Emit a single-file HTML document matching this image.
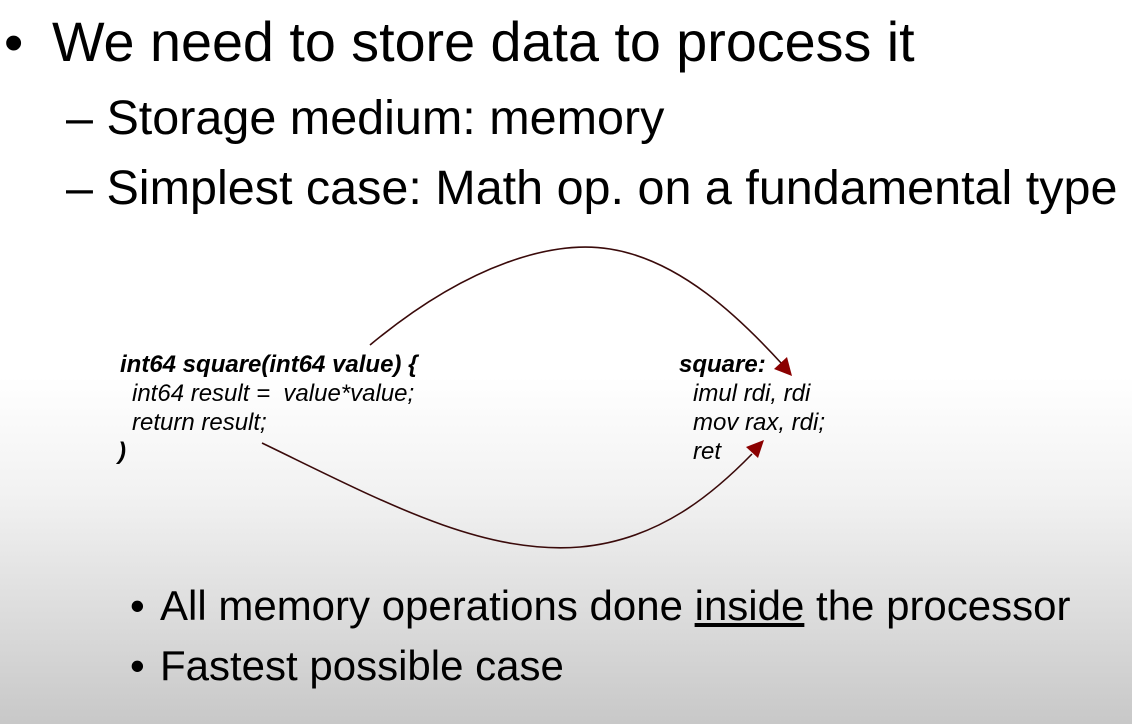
<!DOCTYPE html>
<html><head><style>
html,body{margin:0;padding:0}
body{width:1132px;height:724px;position:relative;overflow:hidden;font-family:"Liberation Sans",Arial,sans-serif;color:#000;
background:linear-gradient(to bottom,#fff 0%,#fff 52%,#f2f2f2 68%,#dcdcdc 85%,#c8c8c8 100%)}
.t{position:absolute;white-space:nowrap;line-height:1}
.code{font-style:italic;font-size:24px}
</style></head><body>
<div class="t" style="left:4px;top:15px;font-size:55px">•</div>
<div class="t" style="left:52px;top:15px;font-size:55.7px">We need to store data to process it</div>
<div class="t" style="left:66px;top:94px;font-size:48.5px">– Storage medium: memory</div>
<div class="t" style="left:66px;top:164px;font-size:48.5px">– Simplest case: Math op. on a fundamental type</div>

<div class="t code" style="left:120px;top:353px;font-weight:bold">int64 square(int64 value) {</div>
<div class="t code" style="left:132px;top:382px">int64 result =&nbsp; value*value;</div>
<div class="t code" style="left:132px;top:411px">return result;</div>
<div class="t code" style="left:118px;top:440px;font-weight:bold">)</div>

<div class="t code" style="left:679px;top:353px;font-weight:bold">square:</div>
<div class="t code" style="left:693px;top:382px">imul rdi, rdi</div>
<div class="t code" style="left:693px;top:411px">mov rax, rdi;</div>
<div class="t code" style="left:693px;top:440px">ret</div>

<svg width="1132" height="724" style="position:absolute;left:0;top:0">
<path d="M370,345 C470,262 555,240 610,249 C680,260 740,318 782,364" fill="none" stroke="#3a0a0a" stroke-width="1.6"/>
<polygon points="792,376 774,369 787,357" fill="#8b0000"/>
<path d="M262,443 C380,500 480,555 580,547 C660,540 715,492 752,454" fill="none" stroke="#3a0a0a" stroke-width="1.6"/>
<polygon points="764,440 758,458 746,447" fill="#8b0000"/>
</svg>

<div class="t" style="left:130px;top:585px;font-size:42px">•</div>
<div class="t" style="left:160px;top:585px;font-size:42px">All memory operations done <span style="text-decoration:underline">inside</span> the processor</div>
<div class="t" style="left:130px;top:645px;font-size:42px">•</div>
<div class="t" style="left:160px;top:645px;font-size:42px">Fastest possible case</div>
</body></html>
